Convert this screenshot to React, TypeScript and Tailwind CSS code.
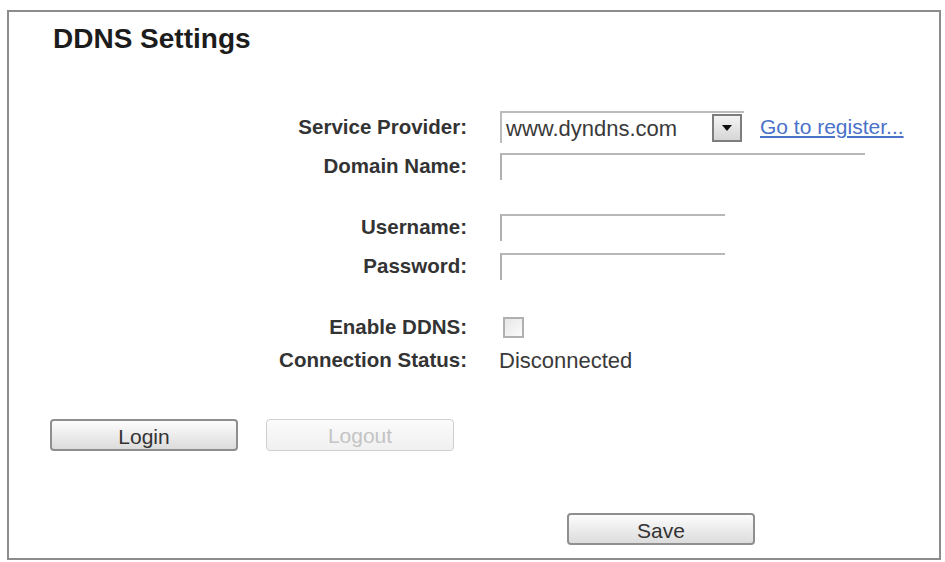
import React from 'react';

const font = { fontFamily: '"Liberation Sans", Arial, sans-serif' };

const Label: React.FC<{ children: React.ReactNode }> = ({ children }) => (
  <div className="w-[458px] shrink-0 text-right text-[20.5px] font-bold text-[#333]">{children}</div>
);

// inset text field: only the top and left edges show
const TextInput: React.FC<{ width: string }> = ({ width }) => (
  <input
    type="text"
    className={`${width} h-[27px] border-t-2 border-l-2 border-t-[#b8b8b8] border-l-[#b0b0b0] bg-white outline-none`}
  />
);

const Button: React.FC<{ children: React.ReactNode; disabled?: boolean }> = ({ children, disabled }) => (
  <button
    disabled={disabled}
    className={
      disabled
        ? 'w-[188px] h-[32px] rounded-[4px] border border-[#cfcfcf] bg-gradient-to-b from-[#fbfbfb] to-[#f0f0f0] text-[21px] text-[#c4c4c4]'
        : 'w-[188px] h-[32px] rounded-[4px] border-2 border-[#8f8f8f] bg-gradient-to-b from-[#fdfdfd] via-[#ececec] to-[#dcdcdc] text-[21px] text-[#333]'
    }
  >
    {children}
  </button>
);

export default function App() {
  return (
    <div className="w-[945px] h-[562px] bg-white pt-[10px] pl-[7px]" style={font}>
      <div className="w-[934px] h-[550px] border-2 border-[#8c8c8c] flex flex-col">
        <h1 className="pl-[44px] pt-[11px] text-[28px] leading-[32px] font-bold text-[#1c1c1c]">DDNS Settings</h1>

        {/* provider */}
        <div className="mt-[56px] flex items-center h-[32px]">
          <Label>Service Provider:</Label>
          <div className="ml-[33px] flex items-center w-[244px] h-[32px] border-t-2 border-l-2 border-[#bcbcbc] bg-white">
            <span className="pl-[4px] flex-1 text-[22px] text-[#3a3a3a]">www.dyndns.com</span>
            <span className="mr-[2px] w-[30px] h-[28px] border-2 border-[#7d7d7d] bg-gradient-to-b from-[#f4f4f4] to-[#d6d6d6] flex items-center justify-center">
              <svg width="10" height="6" viewBox="0 0 10 6">
                <path d="M0 0 L10 0 L5 6 Z" fill="#111" />
              </svg>
            </span>
          </div>
          <a href="#" className="ml-[16px] text-[21px] text-[#4a72c8] underline underline-offset-2">
            Go to register...
          </a>
        </div>

        <div className="mt-[10px] flex items-center h-[27px]">
          <Label>Domain Name:</Label>
          <div className="ml-[33px]">
            <TextInput width="w-[365px]" />
          </div>
        </div>

        <div className="mt-[34px] flex items-center h-[27px]">
          <Label>Username:</Label>
          <div className="ml-[33px]">
            <TextInput width="w-[225px]" />
          </div>
        </div>

        <div className="mt-[12px] flex items-center h-[27px]">
          <Label>Password:</Label>
          <div className="ml-[33px]">
            <TextInput width="w-[225px]" />
          </div>
        </div>

        <div className="mt-[37px] flex items-center h-[20px]">
          <Label>Enable DDNS:</Label>
          <span className="ml-[36px] w-[21px] h-[21px] border-2 border-[#b0b0b0] bg-gradient-to-br from-[#e6e6e6] to-[#fbfbfb]" />
        </div>

        <div className="mt-[11px] flex items-center h-[24px]">
          <Label>Connection Status:</Label>
          <span className="ml-[32px] text-[22px] text-[#3a3a3a]">Disconnected</span>
        </div>

        <div className="mt-[47px] pl-[41px] flex gap-[28px]">
          <Button>Login</Button>
          <Button disabled>Logout</Button>
        </div>

        <div className="mt-[62px] pl-[558px]">
          <Button>Save</Button>
        </div>
      </div>
    </div>
  );
}
